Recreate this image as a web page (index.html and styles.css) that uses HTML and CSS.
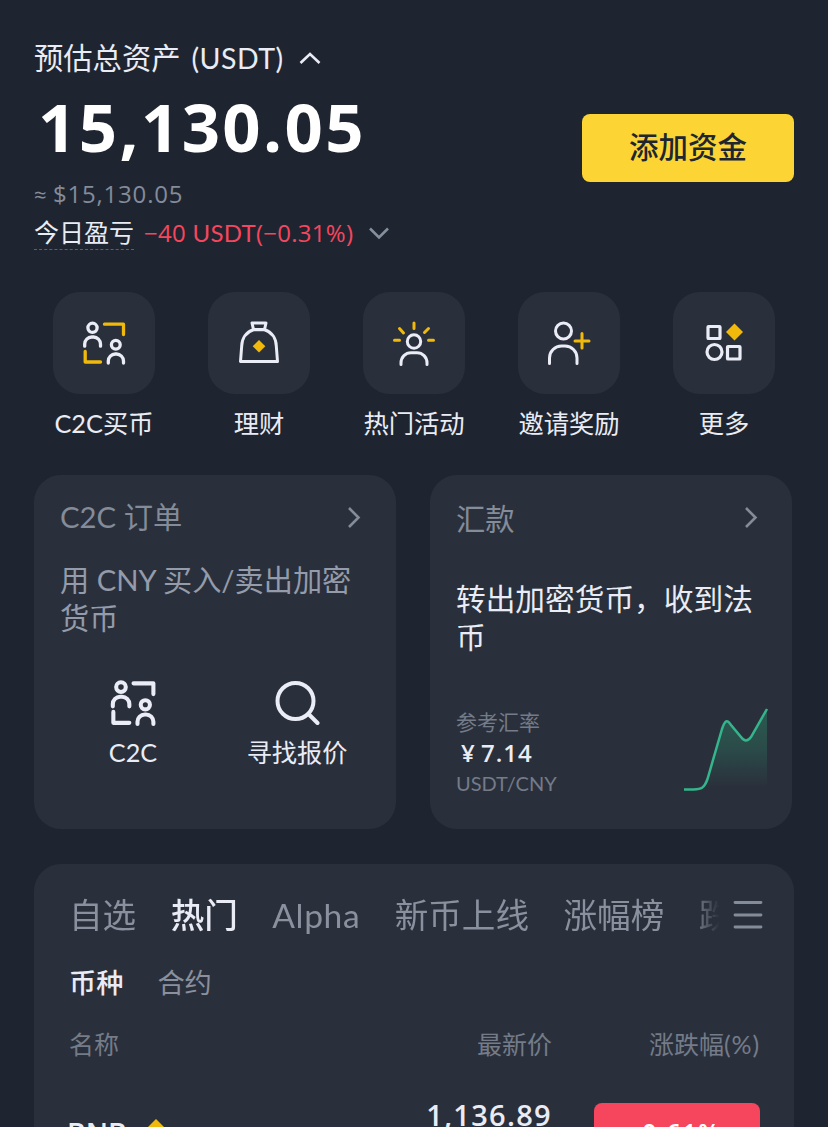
FILE: index.html
```html
<!DOCTYPE html>
<html lang="zh-CN">
<head>
<meta charset="utf-8">
<title>资产总览</title>
<link rel="stylesheet" href="styles.css">
</head>
<body>
<svg width="0" height="0" class="defs">
  <symbol id="c2c" viewBox="0 0 44 44">
    <g fill="none" stroke-linecap="round" stroke-linejoin="round">
      <g stroke="#eaecf6">
        <circle cx="10.500" cy="6.800" r="4.600"/>
        <path d="M2.700 25.200V23a7 7 0 0 1 7-7h1.800a7 7 0 0 1 7 7v2.200"/>
        <circle cx="33.800" cy="23.700" r="4.400"/>
        <path d="M26.300 42V40a7 7 0 0 1 7-7h1.200a7 7 0 0 1 7 7v2"/>
      </g>
      <g class="accent"><path d="M22.500 3.200H41.500V13.500"/><path d="M3.200 30.500V41H18.500"/></g>
    </g>
  </symbol>
</svg>
<main class="page">
  <section class="summary">
    <div class="balance">
      <div class="title"><span>预估总资产</span><span class="unit">(USDT)</span>
        <svg class="chev-up" width="22" height="14" viewBox="0 0 22 14"><path d="M1.500 12 11 3l9.500 9"/></svg></div>
      <div class="total num">15,130.05</div>
      <div class="fiat num"><span class="approx">≈</span>$15,130.05</div>
      <div class="pnl"><span class="pnl-label">今日盈亏</span><span class="pnl-value"><span class="num">−40</span> USDT<span class="num">(−0.31%)</span></span>
        <svg class="chev-down" width="22" height="14" viewBox="0 0 22 14"><path d="M2 2.500 11 11.500l9-9"/></svg></div>
    </div>
    <button class="deposit">添加资金</button>
  </section>

  <nav class="shortcuts">
    <a class="shortcut"><span class="tile"><svg class="gold" width="44" height="44"><use href="#c2c"/></svg></span><span>C2C买币</span></a>
    <a class="shortcut"><span class="tile">
      <svg width="44" height="44" viewBox="0 0 44 44"><g fill="none" stroke="#eaecf6" stroke-width="3" stroke-linejoin="round"><path d="M15 2h14l-1.500 6.500h-11z"/><path d="M16.500 8.700C9 11 5 17.500 4.700 25L3.500 40.500h37L39.300 25C39 17.500 35 11 27.500 8.700z"/></g><path fill="#f0b90b" d="M22 19 28.300 25.300 22 31.600 15.700 25.300z"/></svg></span><span>理财</span></a>
    <a class="shortcut"><span class="tile">
      <svg width="44" height="46" viewBox="0 0 44 46"><g fill="none" stroke-width="3" stroke-linecap="round"><g stroke="#eaecf6"><circle cx="22" cy="21.500" r="6.700"/><path d="M9 44.500v-1.500c0-6 4.500-10.300 10-10.300h6c5.500 0 10 4.300 10 10.300v1.500"/></g><path stroke="#f0b90b" d="M22 3v5.500M7.500 8.500l4 4.500M36.500 8.500l-4 4M2.500 20.200h5M36.500 20.200h5"/></g></svg></span><span>热门活动</span></a>
    <a class="shortcut"><span class="tile">
      <svg width="44" height="44" viewBox="0 0 44 44"><g fill="none" stroke-width="3" stroke-linecap="round"><g stroke="#eaecf6"><circle cx="16.500" cy="10" r="8"/><path d="M2.500 42.500V37a12 12 0 0 1 12-12h3.500a12 12 0 0 1 12 12v5.500"/></g><path stroke="#f0b90b" d="M28 20h14M35 12.500V27"/></g></svg></span><span>邀请奖励</span></a>
    <a class="shortcut"><span class="tile">
      <svg width="44" height="44" viewBox="0 0 44 44"><g fill="none" stroke="#eaecf6" stroke-width="3.200"><rect x="6" y="5.500" width="12" height="12" rx=".6"/><circle cx="12.500" cy="31" r="7.500"/><rect x="25.500" y="25.500" width="12.500" height="12.500" rx=".6"/></g><path fill="#f0b90b" d="M32.500 2.500 41 11 32.500 19.500 24 11z"/></svg></span><span>更多</span></a>
  </nav>

  <section class="cards">
    <article class="card">
      <header class="card-head"><span>C2C 订单</span><svg width="14" height="24" viewBox="0 0 14 24"><path d="M2 2 11.500 11.500 2 21"/></svg></header>
      <p class="lead muted">用 <span class="cny">CNY</span> 买入/卖出加密<br>货币</p>
      <div class="actions">
        <a class="action"><svg class="plain" width="46" height="46"><use href="#c2c"/></svg><span>C2C</span></a>
        <a class="action"><svg width="46" height="46" viewBox="0 0 46 46"><g fill="none" stroke="#eaecf6" stroke-width="4" stroke-linecap="round"><circle cx="21.500" cy="21" r="18"/><path d="m34.500 34 9 9"/></g></svg><span>寻找报价</span></a>
      </div>
    </article>
    <article class="card remit">
      <header class="card-head"><span>汇款</span><svg width="14" height="24" viewBox="0 0 14 24"><path d="M2 2 11.500 11.500 2 21"/></svg></header>
      <p class="lead">转出加密货币，收到法<br>币</p>
      <div class="rate">
        <div>
          <div class="rate-note">参考汇率</div>
          <div class="rate-value num"><span class="yen">¥</span>7.14</div>
          <div class="rate-pair">USDT/CNY</div>
        </div>
        <svg class="spark" width="86" height="86" viewBox="0 0 86 86">
          <defs><linearGradient id="fade" x1="0" y1="0" x2="0" y2="1"><stop offset="0" stop-color="#2ebd85" stop-opacity=".3"/><stop offset=".45" stop-color="#2ebd85" stop-opacity=".2"/><stop offset=".95" stop-color="#2ebd85" stop-opacity="0"/></linearGradient></defs>
          <path fill="url(#fade)" d="M2 82.500H12C20 82.500 22 81 24 73L39 22C42 13 44 12 48 18L58 31Q64 38 69 30L84 3V84H2z"/>
          <path fill="none" stroke="#35b58b" stroke-width="2.500" d="M1 82.500H10C18 82 21 82 24.500 72L39 22C42 13 44 12 48 18L58 30Q63 37 68 30L84 2"/>
        </svg>
      </div>
    </article>
  </section>

  <section class="market">
    <div class="tabs"><div class="tab-list"><span>自选</span><span class="on">热门</span><span class="alpha">Alpha</span><span>新币上线</span><span>涨幅榜</span><span>跌</span></div>
      <svg width="30" height="30" viewBox="0 0 30 30"><path d="M2 2.500h26M2 15h26M2 27h26"/></svg></div>
    <div class="subtabs"><span class="on">币种</span><span>合约</span></div>
    <div class="row thead"><span>名称</span><span>最新价</span><span>涨跌幅<span class="pct">(%)</span></span></div>
    <div class="row coin">
      <span class="coin-name num">BNB<svg width="24" height="24" viewBox="0 0 24 24"><path fill="#f0b90b" d="M12 1 23 12 12 23 1 12z"/></svg></span>
      <span class="price num">1,136.89</span>
      <span class="change num">-0.61%</span>
    </div>
  </section>
</main>
</body>
</html>
```
FILE: styles.css
```css
* { box-sizing: border-box; }
html, body { margin: 0; height: 1127px; overflow: hidden; background: #1f2530; }
body { color: #eaecf5; font-family: Lato, "Noto Sans CJK SC", sans-serif; font-size: 25px; }
.defs { position: absolute; }
.num { font-family: "Open Sans", "Noto Sans CJK SC", sans-serif; }
svg { display: block; flex: none; }
.page { height: 1127px; overflow: hidden; padding: 39px 34px 0; }

.summary { display: flex; justify-content: space-between; height: 253px; }
.title { display: flex; align-items: center; height: 38px; font-size: 29.3px; line-height: 38px; white-space: nowrap; }
.unit { margin-left: 11px; font-size: 28.5px; letter-spacing: .5px; }
.chev-up { margin-left: 15px; }
.chev-up path, .chev-down path { fill: none; stroke: #eaecf5; stroke-width: 2.6; }
.chev-down path { stroke: #848e9c; }
.total { height: 100px; margin-left: 4px; color: #fff; font-size: 67px; font-weight: 700; line-height: 98px; letter-spacing: 2.4px; }
.fiat { display: flex; height: 35px; color: #848b99; font-size: 24px; line-height: 34px; letter-spacing: .8px; }
.approx { width: 19px; font-size: 22px; }
.pnl { display: flex; align-items: center; height: 42px; line-height: 34px; white-space: nowrap; }
.pnl-label { height: 34px; line-height: 33px; border-bottom: 1px dashed #59606e; }
.pnl-value { margin-left: 10px; color: #f6465d; font-size: 24px; letter-spacing: .28px; }
.chev-down { margin-left: 15px; }
.deposit { width: 212px; height: 68px; margin-top: 75px; padding: 0 0 2px; border: 0; border-radius: 8px; background: #fcd535; color: #202630; font: 500 29.5px/66px Lato, "Noto Sans CJK SC", sans-serif; }

.shortcuts { display: flex; justify-content: space-between; height: 183px; padding: 0 3px; }
.shortcut { display: flex; flex-direction: column; align-items: center; width: 134px; font-size: 25.300px; line-height: 36px; white-space: nowrap; }
.tile { display: grid; place-items: center; width: 102px; height: 102px; margin-bottom: 11px; border-radius: 27px; background: #2a303b; }
.gold { --accent: #f0b90b; stroke-width: 3.3; }
.plain { --accent: #eaecf6; stroke-width: 3.9; }
.accent { stroke: var(--accent); }

.cards { display: flex; gap: 34px; }
.card { width: 362px; height: 354px; padding: 23px 26px 0; border-radius: 27px; background: #2a303b; }
.card-head { display: flex; justify-content: space-between; align-items: center; height: 40px; padding-right: 9px; color: #848b99; font-size: 29.300px; line-height: 40px; }
.card-head path { fill: none; stroke: #848b99; stroke-width: 2.600; }
.card-head span { margin-top: -2px; }
.lead { margin: 23px 0 0; font-size: 29.200px; line-height: 38px; white-space: nowrap; }
.muted { color: #949baa; }
.actions { display: flex; gap: 30px; margin-top: 43px; padding-left: 6px; }
.action { display: flex; flex-direction: column; align-items: center; width: 134px; line-height: 36px; }
.action span { margin-top: 8px; font-size: 25.200px; }
.remit .card-head { padding-right: 8px; }
.remit .card-head span { margin-top: 2px; }
.remit .lead { margin-top: 42px; font-size: 29.700px; }
.rate { display: flex; justify-content: space-between; margin-top: 51px; }
.rate-note, .rate-pair { height: 30px; color: #747b89; font-size: 21px; line-height: 30px; }
.rate-pair { font-size: 20px; line-height: 29px; }
.rate-value { display: flex; height: 32px; padding-left: 5px; font-size: 24px; font-weight: 600; line-height: 32px; letter-spacing: 1px; }
.yen { width: 20px; }
.spark { margin: 0 -3px 0 0; }

.market { width: 760px; height: 300px; margin-top: 35px; padding: 26px 34px 0 35px; border-radius: 27px; background: #2a303b; }
.tabs { display: flex; align-items: center; justify-content: space-between; height: 50px; margin-right: -3px; }
.tab-list { display: flex; gap: 34.500px; width: 654px; overflow: hidden; color: #8a909e; font-size: 33.600px; line-height: 48px; white-space: nowrap; -webkit-mask-image: linear-gradient(to right, #000 95%, transparent 99.5%); mask-image: linear-gradient(to right, #000 95%, transparent 99.5%); }
.tab-list .on, .subtabs .on { color: #eaecf5; font-weight: 500; }
.alpha { letter-spacing: .6px; }
.tabs path { stroke: #848b99; stroke-width: 2.800; stroke-linecap: round; }
.subtabs { display: flex; gap: 34px; height: 42px; margin-top: 22px; color: #8a909e; font-size: 27.200px; line-height: 42px; }
.row { display: grid; grid-template-columns: 1fr 200px 208px; }
.row > :nth-child(n+2) { text-align: right; }
.thead { height: 36px; margin-top: 22px; color: #747b89; font-size: 25px; line-height: 36px; }
.pct { letter-spacing: .9px; }
.coin { margin-top: 41px; }
.coin-name { display: flex; align-items: center; gap: 17px; height: 50px; margin-top: 5px; margin-left: -2px; font-size: 28.500px; font-weight: 600; }
.coin-name svg { margin-top: -6px; }
.price { margin-top: -8px; font-size: 29px; font-weight: 600; line-height: 40px; letter-spacing: 1.300px; }
.change { width: 166px; height: 68px; justify-self: end; border-radius: 8px; background: #f6465d; color: #fff; font-size: 25px; font-weight: 600; line-height: 58px; letter-spacing: 1.500px; }
.row > .change { text-align: center; }
```
